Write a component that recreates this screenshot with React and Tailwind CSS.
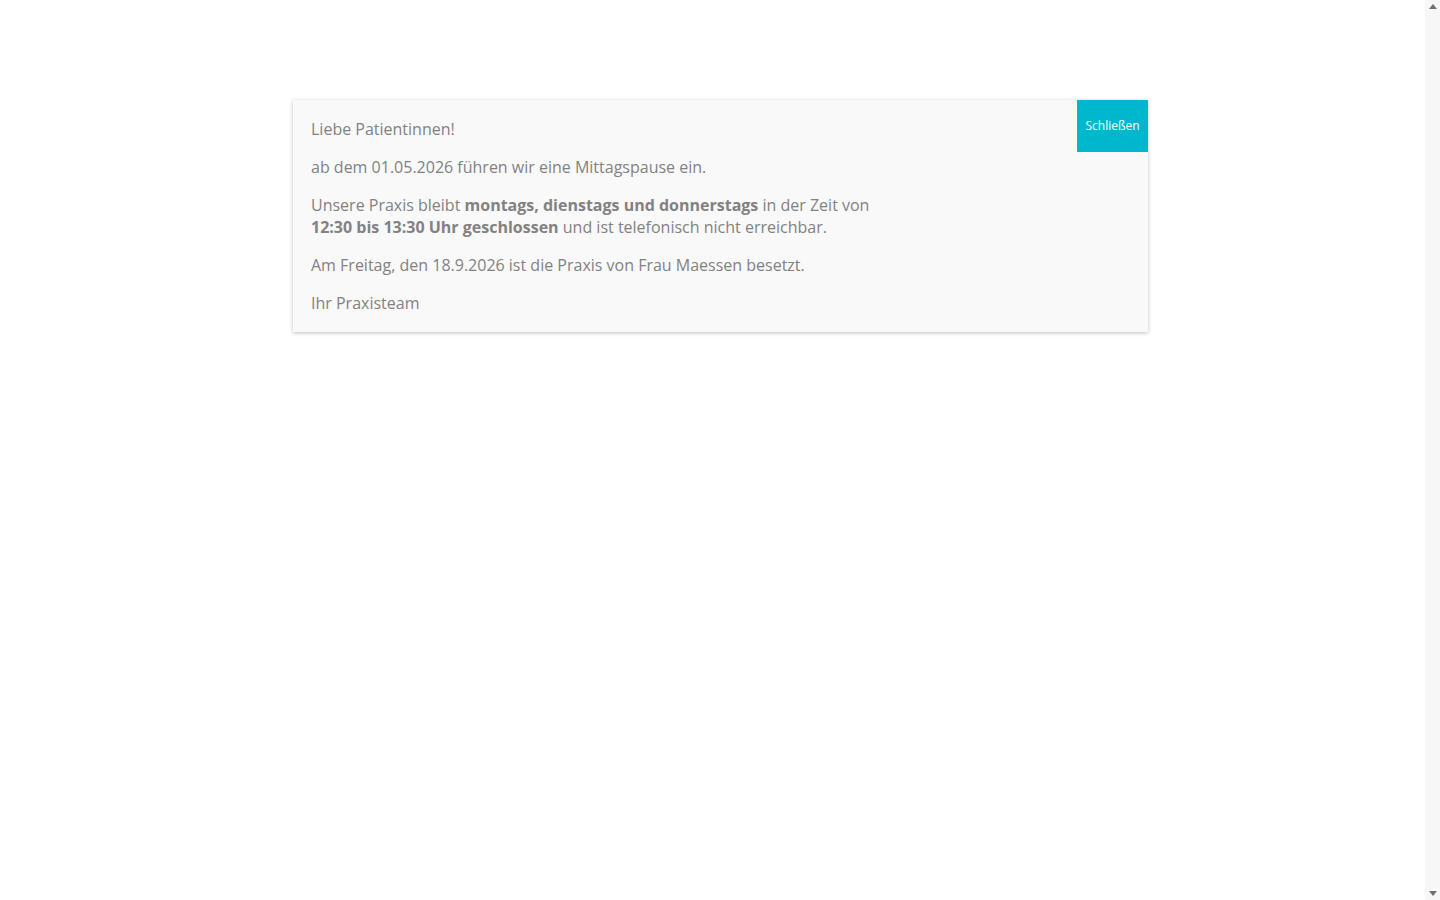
import React from 'react';

// Hinweis-Popup der Praxis
export default function App() {
  return (
    <div className="min-h-[900px] bg-white" style={{ fontFamily: '"Open Sans", "Liberation Sans", sans-serif' }}>
      <div className="pt-[100px] pl-[293px]">
        <div className="relative w-[855px] bg-[#f9f9f9] shadow-[0_1px_4px_rgba(0,0,0,0.25)] px-[18px] py-[18px] text-[16px] leading-[22px] text-[#828282]">
          {/* Schließen-Button */}
          <button className="absolute top-0 right-0 w-[71px] h-[52px] bg-[#00b7cd] text-white text-[12px]">
            Schließen
          </button>

          <div className="space-y-[16px]">
            <p>Liebe Patientinnen!</p>
            <p>ab dem 01.05.2026 führen wir eine Mittagspause ein.</p>
            <p>
              Unsere Praxis bleibt <strong className="font-bold">montags, dienstags und donnerstags</strong> in der Zeit von
              <br />
              <strong className="font-bold">12:30 bis 13:30 Uhr geschlossen</strong> und ist telefonisch nicht erreichbar.
            </p>
            <p>Am Freitag, den 18.9.2026 ist die Praxis von Frau Maessen besetzt.</p>
            <p>Ihr Praxisteam</p>
          </div>
        </div>
      </div>

      {/* Scrollleiste */}
      <div className="fixed top-0 right-0 w-[15px] h-[900px] bg-[#f7f7f7] flex flex-col justify-between items-center py-[4px]">
        <div className="w-0 h-0 border-l-[4px] border-r-[4px] border-b-[5px] border-l-transparent border-r-transparent border-b-[#707070]" />
        <div className="w-0 h-0 border-l-[4px] border-r-[4px] border-t-[5px] border-l-transparent border-r-transparent border-t-[#707070]" />
      </div>
    </div>
  );
}
